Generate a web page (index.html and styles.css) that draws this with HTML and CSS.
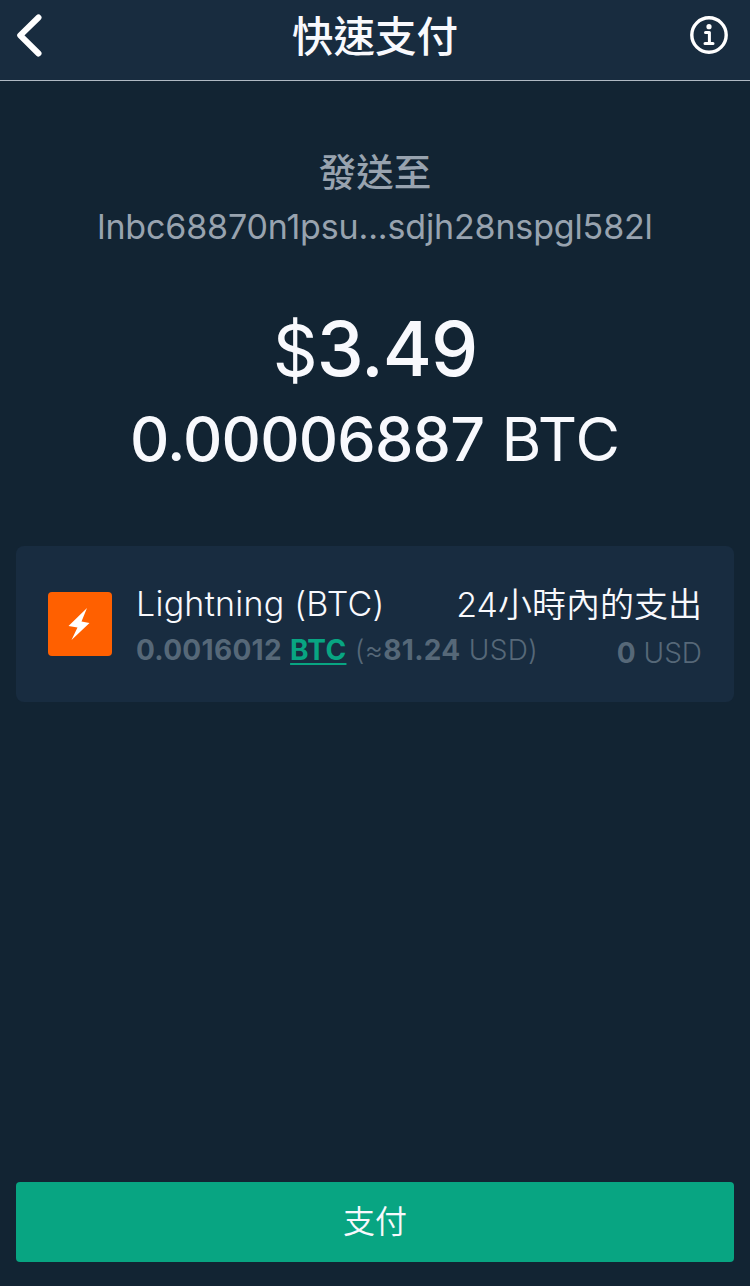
FILE: index.html
```html
<!DOCTYPE html>
<html lang="zh-Hant">
<head>
<meta charset="utf-8">
<title>快速支付</title>
<link rel="stylesheet" href="styles.css">
</head>
<body>
<div class="screen">
  <header class="topbar">
    <svg class="back" viewBox="0 0 30 44" width="30" height="44"><path d="M24.5 4.5 L6.2 22.3 L24.5 40.5" fill="none" stroke="#fff" stroke-width="6" stroke-linecap="round" stroke-linejoin="round"/></svg>
    <h1 class="title">快速支付</h1>
    <svg class="info" viewBox="0 0 40 40" width="40" height="40"><circle cx="20" cy="20" r="17.2" fill="none" stroke="#fff" stroke-width="3.4"/><circle cx="20" cy="11.7" r="2.6" fill="#fff"/><path d="M16.5 17.6h3.9v10.6M16 28.4h8" fill="none" stroke="#fff" stroke-width="3" stroke-linecap="round" stroke-linejoin="round"/></svg>
  </header>
  <main class="content">
    <div class="label">發送至</div>
    <div class="invoice">lnbc68870n1psu...sdjh28nspgl582l</div>
    <div class="fiat"><span class="sign">$</span>3.49</div>
    <div class="crypto"><span class="value">0.00006887</span> BTC</div>
    <section class="card">
      <div class="coin"><svg viewBox="0 0 64 64" width="64" height="64"><path d="M39 16 L20.5 34 L29.5 35.5 L23.5 48 L41.5 31 L33.5 29.5 Z" fill="#fff"/></svg></div>
      <div class="details">
        <div class="row">
          <div class="name">Lightning (BTC)</div>
          <div class="spent-label">24小時內的支出</div>
        </div>
        <div class="row amounts">
          <div class="balance"><b>0.0016012</b> <b class="unit">BTC</b> (≈<b>81.24</b> USD)</div>
          <div class="spent-value"><b>0</b> USD</div>
        </div>
      </div>
    </section>
  </main>
  <button class="pay">支付</button>
</div>
</body>
</html>
```

FILE: styles.css
```css
* { box-sizing: border-box; }
body { margin: 0; background: #122433; color: #f8f9fd; font-family: Inter, "Noto Sans CJK TC", sans-serif; }
b { font-weight: 700; }
.screen { height: 1286px; display: flex; flex-direction: column; }
.topbar { height: 81px; padding: 0 21px 10px 14px; display: grid; grid-template-columns: 54px 1fr 47px; align-items: center; background: #182c3f; border-bottom: 1px solid #b0bac4; }
.title { margin: 0; padding-top: 4px; text-align: center; font-size: 41.5px; line-height: 60px; font-weight: 500; }
.info { justify-self: end; }
.content { flex: 1; padding: 67px 16px 0; text-align: center; }
.label { font-size: 37.5px; line-height: 50px; color: #98a3af; font-weight: 500; }
.invoice { margin-top: 4px; font-size: 34px; line-height: 50px; letter-spacing: -0.15px; color: #98a3af; }
.fiat { margin-top: 51px; height: 92px; font-size: 75px; line-height: 92px; letter-spacing: -1px; font-weight: 500; }
.sign { font-size: 70px; line-height: 1; font-weight: 400; }
.crypto { margin-top: 6px; font-size: 61px; line-height: 76px; font-weight: 400; }
.value { font-weight: 500; letter-spacing: -0.8px; }
.card { margin-top: 69px; height: 156px; padding: 4px 32px 0; display: flex; align-items: center; gap: 24px; text-align: left; background: #182c40; border-radius: 8px; white-space: nowrap; }
.coin { flex: none; width: 64px; height: 64px; margin-bottom: 4px; background: #ff6000; border-radius: 4px; }
.details { flex: 1; padding-top: 2px; }
.row { display: flex; justify-content: space-between; }
.name { font-size: 34px; line-height: 48px; font-weight: 350; letter-spacing: 0.25px; }
.spent-label { padding-top: 1px; font-size: 34px; line-height: 48px; font-weight: 350; }
.amounts { font-size: 28px; line-height: 44px; margin-top: -1px; font-weight: 300; color: #566878; }
.balance { letter-spacing: 0.3px; }
.spent-value { padding-top: 3px; }
.unit { color: #08a582; text-decoration: underline; text-decoration-thickness: 2px; text-underline-offset: 3px; }
.pay { margin: 0 16px 24px; height: 80px; border: 0; border-radius: 4px; background: #08a582; color: #f8f9fd; font: 350 32px/80px Inter, "Noto Sans CJK TC", sans-serif; padding: 0; }
```
